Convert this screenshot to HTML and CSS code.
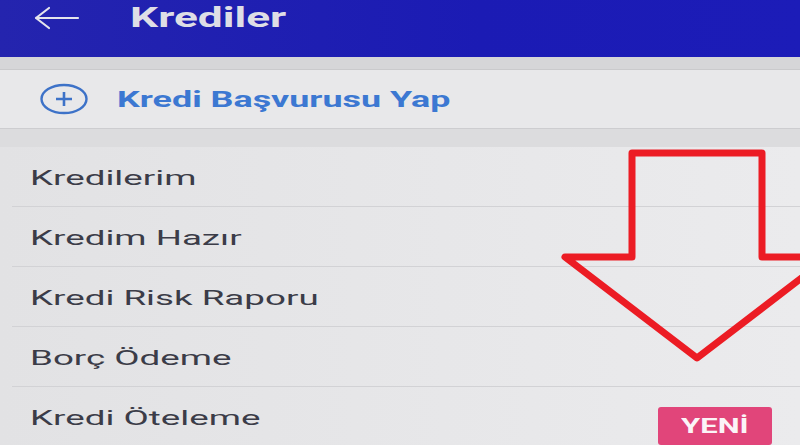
FILE: index.html
```html
<!DOCTYPE html>
<html lang="tr">
<head>
<meta charset="utf-8">
<title>Krediler</title>
<link rel="stylesheet" href="styles.css">
</head>
<body>
<div class="screen">
  <header class="topbar">
    <svg class="back" width="46" height="24" viewBox="0 0 46 24">
      <path d="M2 12 H44 M2 12 L15 2 M2 12 L15 22" fill="none" stroke="#e4e4ec" stroke-width="2.2" stroke-linecap="round" stroke-linejoin="round"/>
    </svg>
    <span class="title stretch">Krediler</span>
  </header>
  <div class="strip"></div>
  <div class="apply">
    <svg class="plus" width="50" height="32" viewBox="0 0 50 32">
      <ellipse cx="25" cy="16" rx="22.5" ry="14" fill="none" stroke="#3d72c8" stroke-width="2.4"/>
      <path d="M17 16 H33 M25 9 V23" stroke="#3d72c8" stroke-width="2.6"/>
    </svg>
    <span class="apply-text stretch">Kredi Başvurusu Yap</span>
  </div>
  <div class="strip2"></div>
  <ul class="list">
    <li class="row"><span class="label stretch">Kredilerim</span></li>
    <li class="row"><span class="label stretch">Kredim Hazır</span></li>
    <li class="row"><span class="label stretch">Kredi Risk Raporu</span></li>
    <li class="row"><span class="label stretch">Borç Ödeme</span></li>
    <li class="row"><span class="label stretch">Kredi Öteleme</span><span class="badge"><span class="badge-text stretch">YENİ</span></span></li>
  </ul>
  <svg class="arrow" width="800" height="445" viewBox="0 0 800 445">
    <path d="M632 153 H762 V257 H829 L697 358 L565 257 H632 Z" fill="none" stroke="#ec1c24" stroke-width="7" stroke-linejoin="round"/>
  </svg>
</div>
</body>
</html>
```
FILE: styles.css
```css
html, body {
  margin: 0;
  padding: 0;
  width: 800px;
  height: 445px;
  overflow: hidden;
  background: #e6e6e8;
  font-family: Roboto, "Liberation Sans", sans-serif;
}
.screen {
  position: relative;
  width: 800px;
  height: 445px;
  overflow: hidden;
  display: flex;
  flex-direction: column;
  background: linear-gradient(90deg, #e2e2e4, #ebebed);
}
.stretch {
  display: inline-block;
  transform-origin: left center;
  white-space: nowrap;
}
.topbar {
  height: 57px;
  flex: none;
  background: linear-gradient(90deg, #2424ae, #1b1bb4 60%, #1c1cb8);
  display: flex;
  align-items: center;
  padding-left: 34px;
  box-sizing: border-box;
}
.back {
  margin-top: -21px;
  flex: none;
}
.title {
  color: #dedee6;
  font-weight: 700;
  font-size: 28px;
  margin-left: 50px;
  margin-top: -22px;
  transform: scaleX(1.58);
}
.strip {
  height: 12px;
  flex: none;
  background: #d6d6d8;
  border-bottom: 1px solid #cacacc;
}
.apply {
  height: 59px;
  flex: none;
  display: flex;
  align-items: center;
  background: #e8e8ea;
  padding-left: 39px;
  box-sizing: border-box;
  border-bottom: 1px solid #cdcdd0;
}
.plus { flex: none; }
.apply-text {
  color: #3c78d2;
  font-weight: 700;
  font-size: 22px;
  margin-left: 28px;
  transform: scaleX(1.63);
}
.strip2 {
  height: 18px;
  flex: none;
  background: #dcdcde;
}
.list {
  list-style: none;
  margin: 0;
  padding: 0 0 0 12px;
}
.row {
  height: 59px;
  border-bottom: 1px solid #d2d2d5;
  display: flex;
  align-items: center;
  padding-left: 18px;
  padding-right: 28px;
  position: relative;
}
.label {
  color: #3b3c48;
  font-size: 21px;
  margin-top: 2px;
  transform: scaleX(1.75);
}
.badge {
  margin-left: auto;
  width: 114px;
  height: 38px;
  border-radius: 3px;
  background: #e1457a;
  display: flex;
  align-items: center;
  justify-content: center;
  margin-top: 18px;
}
.badge-text {
  color: #fbf4f7;
  font-weight: 700;
  font-size: 20px;
  transform: scaleX(1.55);
  transform-origin: center;
}
.arrow {
  position: absolute;
  left: 0;
  top: 0;
  pointer-events: none;
}
```
